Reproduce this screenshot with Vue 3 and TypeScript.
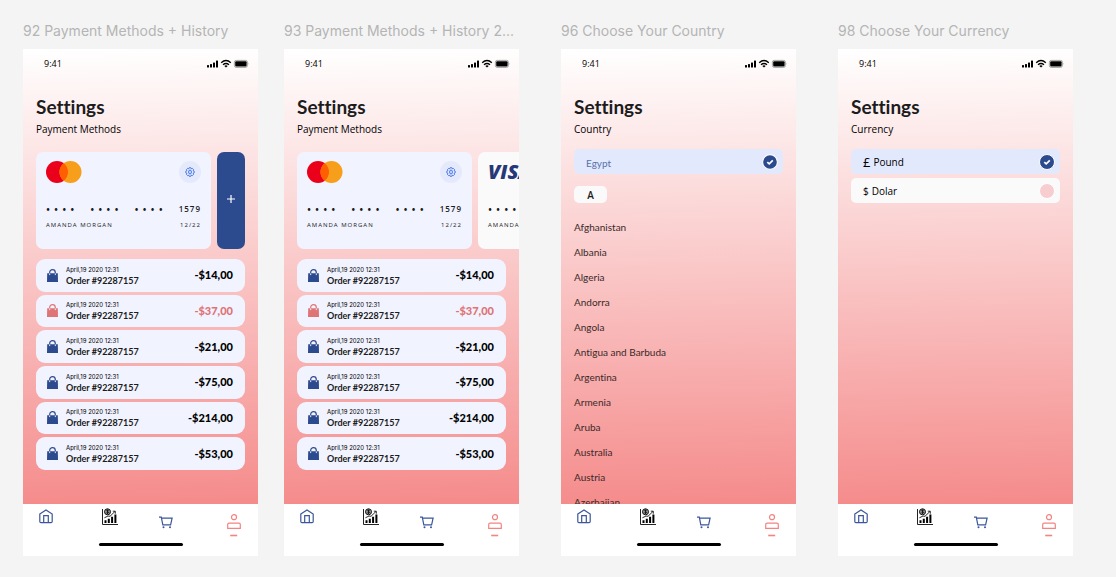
<script setup lang="ts">
import { ref } from 'vue'

interface Screen {
  id: number
  title: string
  kind: 'payment' | 'country' | 'currency'
  subtitle: string
  extra?: 'add' | 'visa'
}

interface Order {
  amount: string
  declined?: boolean
}

const screens: Screen[] = [
  { id: 92, title: '92 Payment Methods + History', kind: 'payment', subtitle: 'Payment Methods', extra: 'add' },
  { id: 93, title: '93 Payment Methods + History 2...', kind: 'payment', subtitle: 'Payment Methods', extra: 'visa' },
  { id: 96, title: '96 Choose Your Country', kind: 'country', subtitle: 'Country' },
  { id: 98, title: '98 Choose Your Currency', kind: 'currency', subtitle: 'Currency' },
]

const orders: Order[] = [
  { amount: '-$14,00' },
  { amount: '-$37,00', declined: true },
  { amount: '-$21,00' },
  { amount: '-$75,00' },
  { amount: '-$214,00' },
  { amount: '-$53,00' },
]

const countries: string[] = [
  'Afghanistan', 'Albania', 'Algeria', 'Andorra', 'Angola', 'Antigua and Barbuda',
  'Argentina', 'Armenia', 'Aruba', 'Australia', 'Austria', 'Azerbaijan',
]

const currencies = [
  { id: 'pound', symbol: '£', label: 'Pound' },
  { id: 'dolar', symbol: '$', label: 'Dolar' },
]

const country = ref('Egypt')
const currency = ref('pound')
</script>

<template>
  <div class="canvas">
    <section v-for="s in screens" :key="s.id" class="frame" :class="'frame-' + s.id">
      <h2 class="frame-title">{{ s.title }}</h2>
      <div class="phone">
        <main class="screen">
          <div class="status">
            <span class="time">9:41</span>
            <svg class="status-icons" width="42" height="10" viewBox="0 0 42 10" aria-hidden="true">
              <rect x="0" y="6" width="2" height="2.4" rx=".5" />
              <rect x="3" y="5" width="2" height="3.4" rx=".5" />
              <rect x="6" y="3.4" width="2" height="5" rx=".5" />
              <rect x="9" y="1.4" width="2" height="7" rx=".5" />
              <g fill="none" stroke="#000" stroke-width="1.4">
                <path d="M14.2 3.7Q19 -.5 23.8 3.7" />
                <path d="M16 5.7Q19 3.2 22 5.7" />
              </g>
              <path d="M17.3 6.9Q19 5.8 20.7 6.9L19 8.6Z" />
              <rect x="27.4" y="1.4" width="13" height="7" rx="1.8" fill="#fff" stroke="#999" stroke-width=".9" />
              <rect x="28.2" y="2.2" width="11.4" height="5.4" rx="1" />
              <path d="M41 3.8q1 1 0 2.2z" fill="#999" />
            </svg>
          </div>
          <h1>Settings</h1>
          <p class="subtitle">{{ s.subtitle }}</p>

          <template v-if="s.kind === 'payment'">
            <div class="cards">
              <article class="card">
                <div class="card-head">
                  <svg width="36" height="22" viewBox="0 0 36 22" role="img" aria-label="Mastercard">
                    <circle cx="11" cy="11" r="11" fill="#eb001b" />
                    <circle cx="24.5" cy="11" r="11" fill="#f79e1b" />
                    <path d="M17.75 2.3a11 11 0 0 1 0 17.4a11 11 0 0 1 0-17.4z" fill="#ff5f00" />
                  </svg>
                  <button class="gear" type="button" aria-label="Card settings">
                    <svg width="10" height="10" viewBox="0 0 20 20" fill="none" stroke="#2f66e8" stroke-width="1.8">
                      <path d="M8.3 1.5h3.4l.8 1.9 2.2-.6 2.3 2.3-.7 2.1 2 1.1v3.4l-2 1 .7 2.2-2.3 2.3-2.2-.7-.8 2H8.3l-.9-2-2.1.7L3 14.9l.7-2.2-2-1V8.3l2-1.1L3 5.1l2.300-2.300 2.100.6z" />
                      <ellipse cx="10" cy="10" rx="2.8" ry="4" />
                    </svg>
                  </button>
                </div>
                <div class="number">
                  <span v-for="g in 3" :key="g" class="group"><i v-for="n in 4" :key="n">•</i></span>
                  <span class="last">1579</span>
                </div>
                <div class="holder"><span>AMANDA MORGAN</span><span>12/22</span></div>
              </article>
              <button v-if="s.extra === 'add'" class="add" type="button" aria-label="Add card">
                <svg width="8" height="8" viewBox="0 0 8 8"><path d="M4 0v8M0 4h8" stroke="#fff" stroke-width="1.2" /></svg>
              </button>
              <article v-else class="card card-visa">
                <div class="card-head"><span class="visa">VISA</span></div>
                <div class="number">
                  <span v-for="g in 3" :key="g" class="group"><i v-for="n in 4" :key="n">•</i></span>
                  <span class="last">1579</span>
                </div>
                <div class="holder"><span>AMANDA MORGAN</span><span>12/22</span></div>
              </article>
            </div>
            <ul class="orders">
              <li v-for="(o, i) in orders" :key="i" class="order" :class="{ declined: o.declined }">
                <svg class="bag" width="11" height="13" viewBox="0 0 11 13" aria-hidden="true">
                  <path d="M.2 4.200h10.600L11 13H0z" fill="currentColor" />
                  <path d="M2.700 6V3.400a2.800 2.800 0 0 1 5.600 0V6" fill="none" stroke="currentColor" stroke-width="1.200" />
                  <path d="M2.700 4.400v1.700M8.300 4.400v1.700" stroke="#f1f3ff" stroke-width="1" />
                </svg>
                <div class="order-text">
                  <span class="date">April,19 2020 12:31</span>
                  <span class="order-no">Order #92287157</span>
                </div>
                <span class="amount">{{ o.amount }}</span>
              </li>
            </ul>
          </template>

          <template v-else-if="s.kind === 'country'">
            <div class="option selected">
              <input v-model="country" class="country-input" type="text" aria-label="Country" />
              <svg class="tick" width="16" height="16" viewBox="0 0 16 16" aria-hidden="true">
                <circle cx="8" cy="8" r="7.4" fill="#2c4a8e" stroke="#fff" stroke-width="1.1" />
                <path d="M5.3 8.1l1.9 1.8 3.6-3.5" fill="none" stroke="#fff" stroke-width="1.7" />
              </svg>
            </div>
            <h3 class="letter">A</h3>
            <ul class="countries">
              <li v-for="c in countries" :key="c">{{ c }}</li>
            </ul>
          </template>

          <div v-else class="options">
            <label v-for="c in currencies" :key="c.id" class="option" :class="{ selected: currency === c.id }">
              <span class="symbol" :class="c.id">{{ c.symbol }}</span>
              <span class="currency">{{ c.label }}</span>
              <span class="radio">
                <input v-model="currency" type="radio" name="currency" :value="c.id" />
                <svg v-if="currency === c.id" class="mark" width="16" height="16" viewBox="0 0 16 16" aria-hidden="true">
                  <path d="M5.3 8.1l1.9 1.8 3.6-3.5" fill="none" stroke="#fff" stroke-width="1.7" />
                </svg>
              </span>
            </label>
          </div>
        </main>

        <nav class="tabs" aria-label="Main">
          <div class="tab-row">
            <a href="#home" aria-label="Home">
              <svg width="14" height="15" viewBox="0 0 14 15" fill="none" stroke="#3c569b" stroke-width="1.2">
                <path d="M.8 5.1L7 .9l6.2 4.2v7.5q0 1.1-1.1 1.1H1.9Q.8 13.700.8 12.600z" />
                <path d="M4.700 13.700V6.600h4.600v7.100" />
              </svg>
            </a>
            <a href="#stats" aria-label="Statistics">
              <svg width="16" height="18" viewBox="0 0 16 18">
                <path d="M.5 1v15.500H16" fill="none" stroke="#222" stroke-width="1" />
                <path d="M2.500 12.200h2V15h-2zM5.800 10.800h2V15h-2zM9.100 8.700h2V15h-2zM12.400 6.500h2V15h-2z" />
                <circle cx="5.500" cy="3.800" r="3" fill="#999" stroke="#111" stroke-width="1" />
                <path d="M6.600 2.500q-2-.8-2 .4 2 .6 2 1.700-.8 1-2.200.2M5.500 1.600v4.500M2.400 9.800L6 8l2 .3L13 3.400M10.800 3.200h2.500v2.500" fill="none" stroke="#111" stroke-width=".9" />
              </svg>
            </a>
            <a href="#cart" aria-label="Cart">
              <svg width="14" height="13" viewBox="0 0 14 13" fill="none" stroke="#3c569b" stroke-width="1.2">
                <path d="M0 1.200h2.300l1.500 7.600h7.800l1.500-6.600H2.500" />
                <circle cx="4.500" cy="11.200" r="1" fill="#3c569b" stroke="none" />
                <circle cx="11" cy="11.200" r="1" fill="#3c569b" stroke="none" />
              </svg>
            </a>
            <a href="#profile" aria-label="Profile">
              <svg width="14" height="23" viewBox="0 0 14 23" fill="none" stroke="#f28482" stroke-width="1.200">
                <circle cx="7" cy="3.200" r="2.500" />
                <path d="M.7 14.400V10.500q0-1.400 1.400-1.400h9.800q1.400 0 1.400 1.400v3.900z" />
                <path d="M3.200 21.500h7" stroke-width="1.600" />
              </svg>
            </a>
          </div>
          <span class="home-bar"></span>
        </nav>
      </div>
    </section>
  </div>
</template>

<style>
body {
  margin: 0;
  background: #f4f4f4;
}
</style>

<style scoped>
* {
  box-sizing: border-box;
}
.canvas {
  display: flex;
  height: 100vh;
  padding: 20px 43px 21px 23px;
  background: #f4f4f4;
  color: #1c1c1c;
  font-family: Lato, "Open Sans", sans-serif;
  font-variant-ligatures: none;
}
.frame {
  flex: 1 1 0;
  min-width: 0;
  display: flex;
  flex-direction: column;
}
.frame + .frame {
  margin-left: 42px;
}
.frame-92 + .frame-93 {
  margin-left: 26px;
}
.frame-title {
  margin: 0 0 7px;
  font: 400 14px/22px Inter, Roboto, sans-serif;
  color: #b5b5b5;
  white-space: nowrap;
}
.phone {
  flex: 1;
  min-height: 0;
  display: flex;
  flex-direction: column;
  overflow: hidden;
  background: #fff;
}
.screen {
  flex: 1;
  min-height: 0;
  overflow: hidden;
  padding: 0 13px;
  background: linear-gradient(179deg, #fff, #f58b8b);
}
.status {
  display: flex;
  align-items: center;
  justify-content: space-between;
  height: 30px;
  margin-right: -4px;
  padding-left: 8px;
}
.time {
  font: 400 9px/12px "Open Sans", sans-serif;
  color: #000;
}
h1 {
  margin: 16px 0 0;
  font-size: 19px;
  line-height: 24px;
  font-weight: 700;
}
.subtitle {
  margin: 2px 0 0;
  font: 400 10px/16px "Open Sans", sans-serif;
  color: #000;
}
.cards {
  display: flex;
  gap: 6px;
  height: 97px;
  margin-top: 15px;
  margin-right: -13px;
  padding-right: 13px;
  overflow: hidden;
}
.card {
  flex: 0 0 175px;
  padding: 9px 10px;
  border-radius: 7px;
  background: #f1f3ff;
}
.card-visa {
  background: #fafafa;
}
.card-head {
  display: flex;
  justify-content: space-between;
  height: 22px;
}
.gear {
  display: flex;
  align-items: center;
  justify-content: center;
  width: 22px;
  height: 22px;
  padding: 0;
  border: 0;
  border-radius: 50%;
  background: #e4e9fc;
}
.visa {
  font: italic 800 20px/22px "Open Sans", sans-serif;
  color: #263878;
}
.number {
  display: flex;
  justify-content: space-between;
  align-items: center;
  height: 12px;
  margin-top: 20px;
  font-size: 8px;
  line-height: 12px;
}
.group {
  display: flex;
  gap: 4px;
}
.group i {
  font-style: normal;
  font-size: 7px;
}
.last {
  font: 600 8px/12px "Open Sans", sans-serif;
  letter-spacing: 1px;
}
.holder {
  display: flex;
  justify-content: space-between;
  margin-top: 5px;
  font: 500 6px/10px "Open Sans", sans-serif;
  letter-spacing: 1px;
  white-space: nowrap;
}
.add {
  flex: 1;
  display: flex;
  align-items: center;
  justify-content: center;
  padding: 0 0 4px;
  border: 0;
  border-radius: 7px;
  background: #2c4a8e;
}
.orders {
  display: grid;
  grid-auto-rows: 1fr;
  gap: 3px;
  height: 211px;
  margin: 10px 0 0;
  padding: 0;
  list-style: none;
}
.order {
  display: flex;
  align-items: center;
  padding: 0 12px 0 11px;
  border-radius: 9px;
  background: #f1f3ff;
}
.bag {
  color: #2c4a8e;
}
.declined .bag,
.declined .amount {
  color: #df7476;
}
.order-text {
  display: flex;
  flex-direction: column;
  flex: 1;
  margin-left: 8px;
}
.date {
  font: 400 6px/10px Inter, sans-serif;
  color: #000;
}
.order-no {
  font-size: 9px;
  line-height: 11px;
  font-weight: 700;
}
.amount {
  font-size: 11px;
  line-height: 14px;
  font-weight: 900;
  color: #000;
}
.options {
  display: grid;
  gap: 4px;
  margin-top: 12px;
}
.option {
  display: flex;
  align-items: center;
  height: 25px;
  padding: 0 5px 0 12px;
  border-radius: 5px;
  background: #fafafa;
}
.subtitle + .option {
  margin-top: 12px;
}
.option.selected {
  background: #e3e9fd;
}
.country-input {
  flex: 1;
  min-width: 0;
  padding: 3px 0 0;
  border: 0;
  outline: 0;
  background: none;
  font: 400 10px/14px Lato, sans-serif;
  color: #5a71ab;
}
.letter {
  display: flex;
  align-items: center;
  justify-content: center;
  width: 33px;
  height: 17px;
  margin: 12px 0;
  border-radius: 5px;
  background: #fafafa;
  font: 600 10px/16px "Open Sans", sans-serif;
}
.countries {
  margin: 0;
  padding: 0;
  list-style: none;
  font-size: 10px;
  line-height: 25px;
  color: #3a2a2a;
}
.symbol {
  margin-right: 3px;
  font: 500 10px/16px "Open Sans", sans-serif;
  color: #000;
}
.symbol.pound {
  font-size: 13px;
}
.currency {
  flex: 1;
  font: 500 10px/16px "Open Sans", sans-serif;
  color: #000;
}
.radio {
  position: relative;
  width: 16px;
  height: 16px;
}
.radio input {
  display: block;
  appearance: none;
  width: 16px;
  height: 16px;
  margin: 0;
  border: 1px solid #fff;
  border-radius: 50%;
  background: #f8cdcf;
}
.radio input:checked {
  background: #2c4a8e;
}
.mark {
  position: absolute;
  inset: 0;
  pointer-events: none;
}
.tabs {
  flex: none;
  padding: 4px 16px 10px;
  background: #fff;
}
.tab-row {
  display: grid;
  grid-template-columns: 63fr 57fr 68fr 15px;
  height: 35px;
}
.tab-row a {
  display: block;
  height: 100%;
}
.tab-row a:nth-child(3) {
  padding-top: 5px;
}
.tab-row a:nth-child(4) {
  padding-top: 6px;
}
.home-bar {
  display: block;
  width: 84px;
  height: 3px;
  margin: 0 auto;
  border-radius: 2px;
  background: #000;
}
</style>
